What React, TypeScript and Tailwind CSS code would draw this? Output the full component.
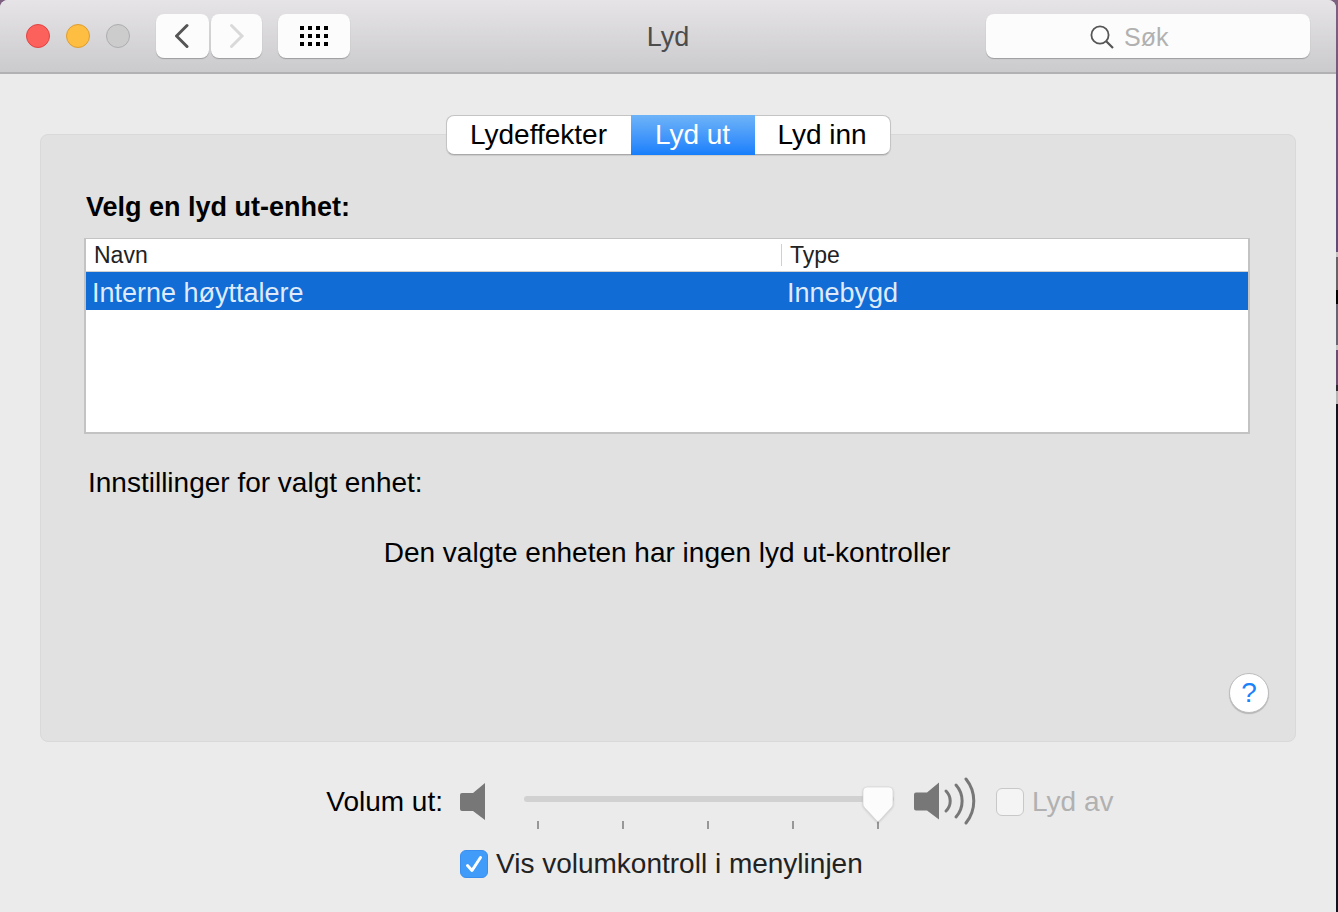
import { useState, type ReactNode } from 'react'
import clsx from 'clsx'

const TABS = ['Lydeffekter', 'Lyd ut', 'Lyd inn']
const TAB_WIDTHS = ['w-[184px]', 'w-[124px]', 'w-[135px]']
const DEVICES = [{ name: 'Interne høyttalere', type: 'Innebygd' }]

interface ToolButtonProps {
  label: string
  className: string
  disabled?: boolean
  children: ReactNode
}

function ToolButton({ label, className, disabled, children }: ToolButtonProps) {
  return (
    <button
      aria-label={label}
      disabled={disabled}
      className={clsx(
        'h-11 flex items-center justify-center rounded-lg bg-[#fcfcfc] shadow-[0_1px_1px_rgba(0,0,0,0.25)]',
        className
      )}
    >
      {children}
    </button>
  )
}

function Header() {
  return (
    <header className="h-[74px] grid grid-cols-[1fr_auto_1fr] items-center px-[26px] pb-px bg-linear-to-b from-[#e6e4e7] to-[#cbcacc] border-b-2 border-[#b1b0b2] rounded-t-lg">
      <div className="flex items-center">
        <div className="flex gap-4 mr-[26px]">
          <button aria-label="Lukk" className="size-6 rounded-full bg-[#fc615c] border border-[#e04443]" />
          <button aria-label="Minimer" className="size-6 rounded-full bg-[#fdbe41] border border-[#dd9d33]" />
          <button aria-label="Zoom" disabled className="size-6 rounded-full bg-[#cdcccd] border border-[#adacae]" />
        </div>
        <ToolButton label="Tilbake" className="w-[53px] mr-0.5">
          <svg width="16" height="26" viewBox="0 0 16 26" fill="none" stroke="#555" strokeWidth="3" strokeLinecap="round">
            <path d="M12 2.5 L1.5 13 L12 23.5" />
          </svg>
        </ToolButton>
        <ToolButton label="Frem" className="w-[51px] mr-4" disabled>
          <svg width="16" height="26" viewBox="0 0 16 26" fill="none" stroke="#d9d9d9" strokeWidth="3" strokeLinecap="round">
            <path d="M2.5 2.5 L13 13 L2.5 23.5" />
          </svg>
        </ToolButton>
        <ToolButton label="Vis alle" className="w-[72px]">
          <svg width="28" height="20" viewBox="0 0 28 20" fill="#000">
            {[0, 8, 16].map((y) =>
              [0, 8, 16, 24].map((x) => <rect key={`${x}-${y}`} x={x} y={y} width="4" height="4" />)
            )}
          </svg>
        </ToolButton>
      </div>
      <h1 className="pt-0.5 text-[27px] leading-8 text-[#4c4c4c]">Lyd</h1>
      <label className="w-[324px] h-11 pl-[104px] flex items-center gap-2.5 justify-self-end rounded-lg bg-[#fcfcfc] shadow-[0_1px_1px_rgba(0,0,0,0.25)]">
        <svg width="24" height="24" viewBox="0 0 24 24" fill="none" stroke="#555" strokeWidth="1.8" className="shrink-0 mt-0.5">
          <circle cx="10" cy="10" r="8.6" />
          <path d="M16.2 16.2 L23 23" strokeWidth="2.2" />
        </svg>
        <input
          type="text"
          aria-label="Søk"
          placeholder="Søk"
          className="min-w-0 flex-1 pt-0.5 text-[25px] leading-8 outline-none placeholder:text-[#b1b1b1]"
        />
      </label>
    </header>
  )
}

function DeviceTable() {
  return (
    <div className="h-[196px] bg-white border-2 border-t border-[#c3c3c3]">
      <table className="w-full table-fixed border-separate border-spacing-0 text-left">
        <thead>
          <tr className="h-[33px] text-[23px] leading-6 text-[#222]">
            <th className="w-[695px] p-0 pl-2 font-normal border-b border-[#d0d0d0]">Navn</th>
            <th className="p-0 font-normal border-b border-[#d0d0d0]">
              <div className="h-[22px] flex items-center pl-2 border-l border-[#d0d0d0]">Type</div>
            </th>
          </tr>
        </thead>
        <tbody>
          {DEVICES.map((device) => (
            <tr key={device.name} className="h-[38px] bg-[#116cd6] text-[27px] leading-8 text-[#dfeafa]">
              <td className="p-0 pl-1.5 pt-1">{device.name}</td>
              <td className="p-0 pl-1.5 pt-1">{device.type}</td>
            </tr>
          ))}
        </tbody>
      </table>
    </div>
  )
}

function VolumeSlider() {
  const [volume, setVolume] = useState(100)

  return (
    <div className="relative w-[370px] h-[48px] pt-[19px]">
      <div className="h-1.5 rounded-full bg-[#d1d1d1]" />
      <div className="flex justify-between mt-[19px] pl-[13px] pr-[15px]">
        {[0, 1, 2, 3, 4].map((tick) => (
          <span key={tick} className="w-0.5 h-2 bg-[#979797]" />
        ))}
      </div>
      <svg
        width="32"
        height="38"
        viewBox="0 0 32 38"
        className="absolute top-[9px] drop-shadow-[0_1px_1px_rgba(0,0,0,0.15)]"
        style={{ left: `calc((100% - 32px) * ${volume / 100})` }}
      >
        <path
          d="M5 1 H27 Q31 1 31 5 V18 Q31 20 29.5 21.5 L17 35 Q16 36 15 35 L2.5 21.5 Q1 20 1 18 V5 Q1 1 5 1 Z"
          fill="#fcfcfc"
          stroke="#d2d2d2"
          strokeWidth="0.7"
        />
      </svg>
      <input
        id="volume"
        type="range"
        min={0}
        max={100}
        value={volume}
        onChange={(e) => setVolume(Number(e.target.value))}
        className="absolute inset-0 w-full h-full opacity-0"
      />
    </div>
  )
}

// sliver of the desktop behind the window
function DesktopEdge() {
  return (
    <div className="w-0.5 flex flex-col bg-[#10131c]">
      <div className="h-[252px] bg-linear-to-b from-[#7d5f80] to-[#5f4a78]" />
      <div className="h-[5px] bg-[#c4c4c4]" />
      <div className="h-[33px] bg-[#6a6168]" />
      <div className="h-3.5 bg-black" />
      <div className="h-[41px] bg-[#666473]" />
      <div className="h-[5px] bg-[#c4c4c4]" />
      <div className="h-[35px] bg-[#6a4c70]" />
      <div className="h-1.5 bg-[#2c2830]" />
      <div className="h-[13px] bg-[#b4b4b4]" />
    </div>
  )
}

const SPEAKER = 'M2 10 H13 L25 0 V37 L13 28 H2 Q0 28 0 26 V12 Q0 10 2 10 Z'

export default function App() {
  const [tab, setTab] = useState('Lyd ut')
  const [showInMenu, setShowInMenu] = useState(true)

  return (
    <div className="min-h-screen flex bg-[#7d5f80] font-['Liberation_Sans',Arial,sans-serif] text-black">
      <div className="flex-1 min-w-0 bg-[#ebebeb] rounded-t-lg">
        <Header />
        <main className="pt-[41px]">
          <div role="tablist" className="relative z-10 w-fit mx-auto -mb-[21px] flex rounded-lg bg-white border border-[#c4c4c4] border-b-[#a9a9a9] shadow-[0_1px_1px_rgba(0,0,0,0.1)]">
            {TABS.map((name, i) => (
              <button
                key={name}
                role="tab"
                aria-selected={tab === name}
                onClick={() => setTab(name)}
                className={clsx(
                  'h-10 -my-px text-[28px] leading-10',
                  TAB_WIDTHS[i],
                  tab === name && 'bg-linear-to-b from-[#6db3f8] to-[#157efb] text-white'
                )}
              >
                {name}
              </button>
            ))}
          </div>

          <section className="mx-10 h-[608px] pl-[43px] pr-[45px] pt-14 pb-7 flex flex-col bg-[#e1e1e1] border border-[#d9d9d9] rounded-lg">
            <h2 className="pl-0.5 mb-[15px] text-[27px] leading-8 font-bold">Velg en lyd ut-enhet:</h2>
            <DeviceTable />
            <p className="pl-1 mt-[33px] text-[28px] leading-8">Innstillinger for valgt enhet:</p>
            <p className="mt-[38px] text-center text-[28px] leading-8">Den valgte enheten har ingen lyd ut-kontroller</p>
            <button
              aria-label="Hjelp"
              className="mt-auto self-end -mr-[19px] size-10 rounded-full bg-white border border-[#bdbdbd] text-[28px] leading-9 text-[#1a82fb] shadow-[0_1px_1px_rgba(0,0,0,0.2)]"
            >
              ?
            </button>
          </section>

          <div className="mt-[35px] grid grid-cols-[443px_1fr] gap-x-[17px] items-center text-[28px] leading-8">
            <label htmlFor="volume" className="pt-0.5 text-right">Volum ut:</label>
            <div className="flex items-center">
              <svg width="25" height="37" viewBox="0 0 25 37" fill="#777" className="mr-[39px]">
                <path d={SPEAKER} />
              </svg>
              <VolumeSlider />
              <svg width="63" height="48" viewBox="0 0 63 48" className="ml-5 mr-[19px]">
                <path d={SPEAKER} transform="translate(0 5.5)" fill="#777" />
                <g fill="none" stroke="#777" strokeWidth="3" strokeLinecap="round">
                  <path d="M32 14 A14 14 0 0 1 32 34" />
                  <path d="M42 8 A24 24 0 0 1 42 40" />
                  <path d="M52 2 A35 35 0 0 1 52 46" />
                </g>
              </svg>
              <label className="pt-0.5 flex items-center gap-2 text-[#b1b1b1]">
                <input
                  type="checkbox"
                  disabled
                  className="appearance-none size-7 rounded-md bg-[#f4f4f4] border border-[#c8c8c8]"
                />
                Lyd av
              </label>
            </div>
            <label className="col-start-2 w-fit mt-[23px] flex items-center gap-2 text-[#222]">
              <span className="relative size-7">
                <input
                  type="checkbox"
                  checked={showInMenu}
                  onChange={(e) => setShowInMenu(e.target.checked)}
                  className="block appearance-none size-7 rounded-md bg-[#f4f4f4] border border-[#c8c8c8] checked:bg-[#419bf9] checked:border-[#3a8fee]"
                />
                {showInMenu && (
                  <svg viewBox="0 0 28 28" fill="none" stroke="#fff" strokeWidth="3" strokeLinecap="round" strokeLinejoin="round" className="absolute inset-0 pointer-events-none">
                    <path d="M7.5 15.5 L12 20.5 L20.5 7.5" />
                  </svg>
                )}
              </span>
              Vis volumkontroll i menylinjen
            </label>
          </div>
        </main>
      </div>
      <DesktopEdge />
    </div>
  )
}
